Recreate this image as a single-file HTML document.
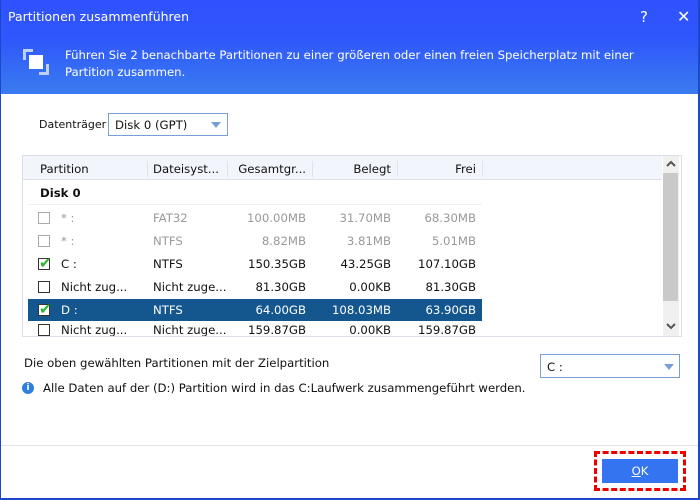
<!DOCTYPE html><html><head><style>
*{margin:0;padding:0;box-sizing:border-box}
body{width:700px;height:500px;position:relative;overflow:hidden;background:#fff;font-family:"DejaVu Sans","Liberation Sans",sans-serif;font-size:11.7px;color:#111}
.a{position:absolute;white-space:nowrap}
.r{text-align:right}
.g{color:#999}
.cb{position:absolute;width:12px;height:12px;border:1px solid #333;background:#fff}
.cb.gr{border-color:#aaa}
.sep{position:absolute;top:161px;width:1px;height:16px;background:#e0e3ea}
.ck{position:absolute;color:#2db52d;font-size:15px;font-weight:bold;line-height:14px}
</style></head><body>
<div class="a" style="left:0;top:0;width:700px;height:94px;background:linear-gradient(#2f52fe,#2f56fc 40%,#3a7cef)"></div>
<div class="a" style="left:0;top:0;width:1px;height:500px;background:#1d49c9"></div>
<div class="a" style="left:698px;top:0;width:2px;height:500px;background:#1d49c9"></div>
<div class="a" style="left:0;top:498px;width:700px;height:2px;background:#1d49c9"></div>
<div class="a" style="left:8px;top:9px;color:#fff;font-size:12.5px">Partitionen zusammenführen</div>
<div class="a" style="left:640px;top:8px;color:#fff;font-size:15px">?</div>
<div class="a" style="left:677px;top:7px;color:#fff;font-size:16px">✕</div>
<svg class="a" style="left:22px;top:48px" width="28" height="28"><path d="M1 1h10v3H4v8H1z M27 27H17v-3h7v-8h3z" fill="#bcd0fb"/><rect x="7" y="7" width="14" height="14" fill="#fff"/></svg>
<div class="a" style="left:65px;top:47px;color:#fff;line-height:17px">Führen Sie 2 benachbarte Partitionen zu einer größeren oder einen freien Speicherplatz mit einer<br>Partition zusammen.</div>
<div class="a" style="left:39px;top:118px;font-size:11px">Datenträger</div>
<div class="a" style="left:108px;top:113px;width:120px;height:23px;border:1px solid #7a9fd6;padding:4px 6px">Disk 0 (GPT)</div>
<div class="a" style="left:211px;top:122px;border-left:5px solid transparent;border-right:5px solid transparent;border-top:6px solid #7a9fd6"></div>
<div class="a" style="left:22px;top:155px;width:660px;height:182px;border:1px solid #dcdfe8"></div>
<div class="a" style="left:23px;top:156px;width:639px;height:24px;background:#f2f5fb;border-bottom:1px solid #dde2ec"></div>
<div class="sep" style="left:147px"></div><div class="sep" style="left:227px"></div><div class="sep" style="left:312px"></div><div class="sep" style="left:397px"></div><div class="sep" style="left:482px"></div>
<div class="a" style="left:663px;top:156px;width:16px;height:180px;background:#f0f0f0"></div>
<div class="a" style="left:663px;top:173px;width:15px;height:128px;background:#c9c9c9"></div>
<svg class="a" style="left:666px;top:160px" width="10" height="8"><path d="M1 6L5 2L9 6" stroke="#555" stroke-width="2" fill="none"/></svg>
<svg class="a" style="left:666px;top:322px" width="10" height="8"><path d="M1 2L5 6L9 2" stroke="#555" stroke-width="2" fill="none"/></svg>
<div class="a" style="left:40px;top:162px">Partition</div>
<div class="a" style="left:153px;top:162px">Dateisyst...</div>
<div class="a r" style="left:220px;top:162px;width:86px">Gesamtgr...</div>
<div class="a r" style="left:320px;top:162px;width:71px">Belegt</div>
<div class="a r" style="left:400px;top:162px;width:76px">Frei</div>
<div class="a" style="left:40px;top:186px;font-weight:bold">Disk 0</div>
<div class="a" style="left:28px;top:204px;width:454px;height:1px;background:#f0f0f0"></div>
<div class="a" style="left:28px;top:299px;width:454px;height:22px;background:#14578f"></div>
<div class="cb gr" style="left:38px;top:212px"></div><div class="a g" style="left:61px;top:211px">* :</div><div class="a g" style="left:153px;top:211px">FAT32</div><div class="a g r" style="left:220px;top:211px;width:86px">100.00MB</div><div class="a g r" style="left:310px;top:211px;width:81px">31.70MB</div><div class="a g r" style="left:400px;top:211px;width:76px">68.30MB</div>
<div class="cb gr" style="left:38px;top:235px"></div><div class="a g" style="left:61px;top:234px">* :</div><div class="a g" style="left:153px;top:234px">NTFS</div><div class="a g r" style="left:220px;top:234px;width:86px">8.82MB</div><div class="a g r" style="left:310px;top:234px;width:81px">3.81MB</div><div class="a g r" style="left:400px;top:234px;width:76px">5.01MB</div>
<div class="cb" style="left:38px;top:258px"></div><div class="ck" style="left:39px;top:256px">✔</div><div class="a" style="left:61px;top:257px">C :</div><div class="a" style="left:153px;top:257px">NTFS</div><div class="a r" style="left:220px;top:257px;width:86px">150.35GB</div><div class="a r" style="left:310px;top:257px;width:81px">43.25GB</div><div class="a r" style="left:400px;top:257px;width:76px">107.10GB</div>
<div class="cb" style="left:38px;top:281px"></div><div class="a" style="left:61px;top:280px">Nicht zug...</div><div class="a" style="left:153px;top:280px">Nicht zuge...</div><div class="a r" style="left:220px;top:280px;width:86px">81.30GB</div><div class="a r" style="left:310px;top:280px;width:81px">0.00KB</div><div class="a r" style="left:400px;top:280px;width:76px">81.30GB</div>
<div class="cb" style="left:38px;top:304px"></div><div class="ck" style="left:39px;top:302px">✔</div><div class="a" style="left:61px;top:303px;color:#fff">D :</div><div class="a" style="left:153px;top:303px;color:#fff">NTFS</div><div class="a r" style="left:220px;top:303px;width:86px;color:#fff">64.00GB</div><div class="a r" style="left:310px;top:303px;width:81px;color:#fff">108.03MB</div><div class="a r" style="left:400px;top:303px;width:76px;color:#fff">63.90GB</div>
<div class="cb" style="left:38px;top:324px;height:12px"></div><div class="a" style="left:61px;top:323px">Nicht zug...</div><div class="a" style="left:153px;top:323px">Nicht zuge...</div><div class="a r" style="left:220px;top:323px;width:86px">159.87GB</div><div class="a r" style="left:310px;top:323px;width:81px">0.00KB</div><div class="a r" style="left:400px;top:323px;width:76px">159.87GB</div>
<div class="a" style="left:1px;top:337px;width:697px;height:8px;background:#fff"></div>
<div class="a" style="left:22px;top:336px;width:660px;height:1px;background:#dcdfe8"></div>
<div class="a" style="left:24px;top:356px">Die oben gewählten Partitionen mit der Zielpartition</div>
<div class="a" style="left:540px;top:354px;width:140px;height:24px;border:1px solid #7a9fd6;padding:5px 6px">C :</div>
<div class="a" style="left:664px;top:364px;border-left:5px solid transparent;border-right:5px solid transparent;border-top:6px solid #7a9fd6"></div>
<div class="a" style="left:22px;top:382px;width:12px;height:12px;border-radius:50%;background:#2f7fdf;color:#fff;font-size:9px;font-weight:bold;text-align:center;line-height:12px">i</div>
<div class="a" style="left:43px;top:381px">Alle Daten auf der (D:) Partition wird in das C:Laufwerk zusammengeführt werden.</div>
<div class="a" style="left:1px;top:445px;width:697px;height:1px;background:#e3e3e3"></div>
<div class="a" style="left:594px;top:451px;width:92px;height:40px;border:3px dashed #e00"></div>
<div class="a" style="left:602px;top:459px;width:76px;height:24px;background:#3574f0;color:#fff;text-align:center;line-height:24px"><u>O</u>K</div>
</body></html>
